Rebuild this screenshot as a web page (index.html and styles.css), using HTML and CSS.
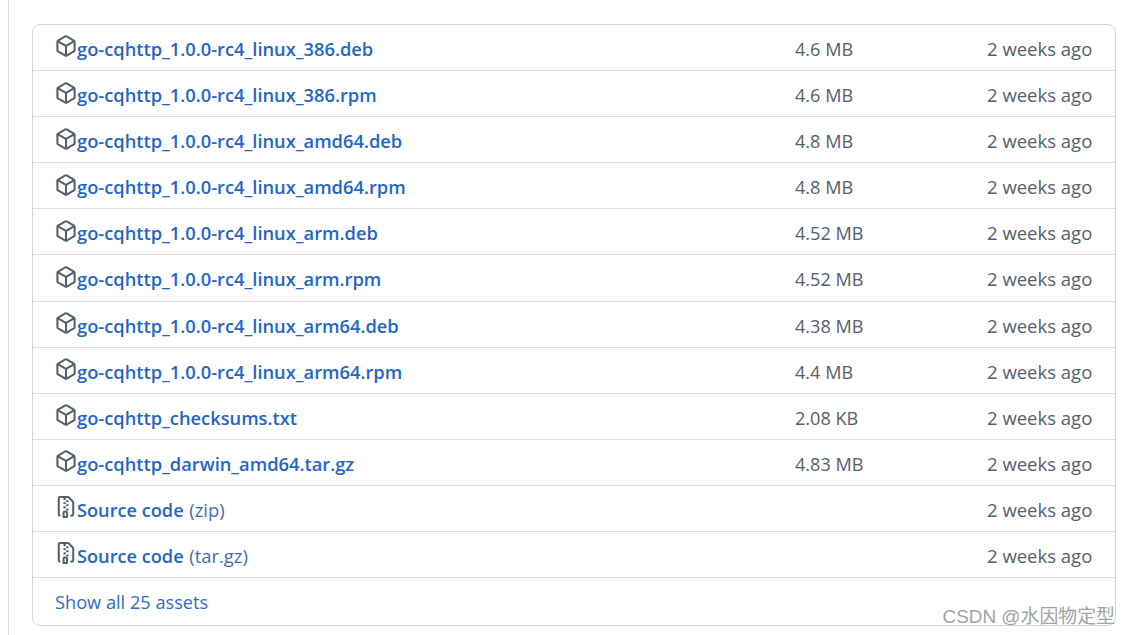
FILE: index.html
```html
<!DOCTYPE html>
<html lang="en">
<head>
<meta charset="utf-8">
<title>Assets</title>
<link rel="stylesheet" href="styles.css">
</head>
<body>
<svg class="sprite" aria-hidden="true">
<symbol id="pkg" viewBox="0 0 16 16"><path fill-rule="evenodd" d="M8.878.392a1.75 1.75 0 00-1.756 0l-5.25 3.045A1.75 1.75 0 001 4.951v6.098c0 .624.332 1.2.872 1.514l5.25 3.045a1.75 1.75 0 001.756 0l5.25-3.045c.54-.313.872-.89.872-1.514V4.951c0-.624-.332-1.201-.872-1.514L8.878.392zM7.875 1.69a.25.25 0 01.25 0l4.63 2.685L8 7.133 3.245 4.375l4.63-2.685zM2.5 5.677v5.372c0 .09.047.171.125.216l4.625 2.683V8.432L2.5 5.677zm6.25 8.271l4.625-2.683a.25.25 0 00.125-.216V5.677L8.75 8.432v5.516z"/></symbol>
<symbol id="zip" viewBox="0 0 16 16"><path fill-rule="evenodd" d="M3.5 1.75a.25.25 0 01.25-.25h3a.75.75 0 000 1.5h.5a.75.75 0 000-1.5h2.086a.25.25 0 01.177.073l2.914 2.914a.25.25 0 01.073.177v8.586a.25.25 0 01-.25.25h-.5a.75.75 0 000 1.5h.5A1.75 1.75 0 0014 13.25V4.664c0-.464-.184-.909-.513-1.237L10.573.513A1.75 1.75 0 009.336 0H3.75A1.75 1.75 0 002 1.75v11.5c0 .649.353 1.214.874 1.515a.75.75 0 10.752-1.298.25.25 0 01-.126-.217V1.75zM8.75 3a.75.75 0 000 1.5h.5a.75.75 0 000-1.5h-.5zM6 5.25a.75.75 0 01.75-.75h.5a.75.75 0 010 1.5h-.5A.75.75 0 016 5.25zm2 1.5A.75.75 0 018.75 6h.5a.75.75 0 010 1.5h-.5A.75.75 0 018 6.75zm-1.25.75a.75.75 0 000 1.5h.5a.75.75 0 000-1.5h-.5zM8 9.75A.75.75 0 018.75 9h.5a.75.75 0 010 1.5h-.5A.75.75 0 018 9.75zm-.75.75a1.75 1.75 0 00-1.75 1.75v3c0 .414.336.75.75.75h2.5a.75.75 0 00.75-.75v-3a1.75 1.75 0 00-1.75-1.75h-.5zM7 12.25a.25.25 0 01.25-.25h.5a.25.25 0 01.25.25v2.25H7v-2.25z"/></symbol>
</svg>
<main class="page">
  <ul class="assets">
    <li class="row"><a class="name" href="#"><svg class="icon"><use href="#pkg"/></svg><b>go-cqhttp_1.0.0-rc4_linux_386.deb</b></a><span class="size">4.6 MB</span><span class="time">2 weeks ago</span></li>
    <li class="row"><a class="name" href="#"><svg class="icon"><use href="#pkg"/></svg><b>go-cqhttp_1.0.0-rc4_linux_386.rpm</b></a><span class="size">4.6 MB</span><span class="time">2 weeks ago</span></li>
    <li class="row"><a class="name" href="#"><svg class="icon"><use href="#pkg"/></svg><b>go-cqhttp_1.0.0-rc4_linux_amd64.deb</b></a><span class="size">4.8 MB</span><span class="time">2 weeks ago</span></li>
    <li class="row"><a class="name" href="#"><svg class="icon"><use href="#pkg"/></svg><b>go-cqhttp_1.0.0-rc4_linux_amd64.rpm</b></a><span class="size">4.8 MB</span><span class="time">2 weeks ago</span></li>
    <li class="row"><a class="name" href="#"><svg class="icon"><use href="#pkg"/></svg><b>go-cqhttp_1.0.0-rc4_linux_arm.deb</b></a><span class="size">4.52 MB</span><span class="time">2 weeks ago</span></li>
    <li class="row"><a class="name" href="#"><svg class="icon"><use href="#pkg"/></svg><b>go-cqhttp_1.0.0-rc4_linux_arm.rpm</b></a><span class="size">4.52 MB</span><span class="time">2 weeks ago</span></li>
    <li class="row"><a class="name" href="#"><svg class="icon"><use href="#pkg"/></svg><b>go-cqhttp_1.0.0-rc4_linux_arm64.deb</b></a><span class="size">4.38 MB</span><span class="time">2 weeks ago</span></li>
    <li class="row"><a class="name" href="#"><svg class="icon"><use href="#pkg"/></svg><b>go-cqhttp_1.0.0-rc4_linux_arm64.rpm</b></a><span class="size">4.4 MB</span><span class="time">2 weeks ago</span></li>
    <li class="row"><a class="name" href="#"><svg class="icon"><use href="#pkg"/></svg><b>go-cqhttp_checksums.txt</b></a><span class="size">2.08 KB</span><span class="time">2 weeks ago</span></li>
    <li class="row"><a class="name" href="#"><svg class="icon"><use href="#pkg"/></svg><b>go-cqhttp_darwin_amd64.tar.gz</b></a><span class="size">4.83 MB</span><span class="time">2 weeks ago</span></li>
    <li class="row"><a class="name" href="#"><svg class="icon"><use href="#zip"/></svg><b class="src">Source code</b><span class="ext">(zip)</span></a><span class="size"></span><span class="time">2 weeks ago</span></li>
    <li class="row"><a class="name" href="#"><svg class="icon"><use href="#zip"/></svg><b class="src">Source code</b><span class="ext">(tar.gz)</span></a><span class="size"></span><span class="time">2 weeks ago</span></li>
    <li class="row more"><a class="show" href="#">Show all 25 assets</a></li>
  </ul>
</main>
<div class="mark">CSDN @水因物定型</div>
</body>
</html>
```
FILE: styles.css
```css
* { box-sizing: border-box; }
html, body { margin: 0; height: 100%; overflow: hidden; background: #fff; }
body {
  font-family: "Open Sans", "Noto Sans", "Noto Sans CJK SC", sans-serif;
  font-size: 18px;
  line-height: 24px;
  color: #57606a;
}
.sprite { display: none; }
.page {
  margin-left: 8px;
  height: 635px;
  border-left: 1px solid #d8dee4;
  padding: 24px 14px 0 23px;
}
.assets {
  list-style: none;
  margin: 0;
  padding: 0;
  height: 602px;
  border: 1px solid #d0d7de;
  border-radius: 8px;
}
.row {
  display: grid;
  grid-template-columns: 1fr 192px 105px;
  align-items: center;
  height: 46.1px;
  padding: 2.8px 23px 0 22px;
  border-bottom: 1px solid #d8dee4;
}
.row.more { display: flex; border-bottom: 0; height: 48px; padding-top: 0; }
.name { display: flex; align-items: center; color: #1f66c5; text-decoration: none; white-space: nowrap; }
.name b { font-weight: 600; font-size: 18.3px; }
.name b.src { font-size: 18.2px; }
.icon { width: 22px; height: 22px; flex: none; fill: #57606a; margin-top: -5px; }
.ext { margin-left: 5.5px; font-size: 18.45px; font-weight: 400; color: #3f6eb8; }
.size { font-size: 18.1px; }
.time { font-size: 18.5px; text-align: right; white-space: nowrap; }
.show { font-size: 18.2px; color: #2f6cc0; text-decoration: none; }
.mark {
  position: absolute;
  right: 15px;
  bottom: 6px;
  font-family: "Liberation Sans", "Noto Sans CJK SC", sans-serif;
  font-size: 18.9px;
  color: #a3a3a3;
  white-space: nowrap;
}
```
